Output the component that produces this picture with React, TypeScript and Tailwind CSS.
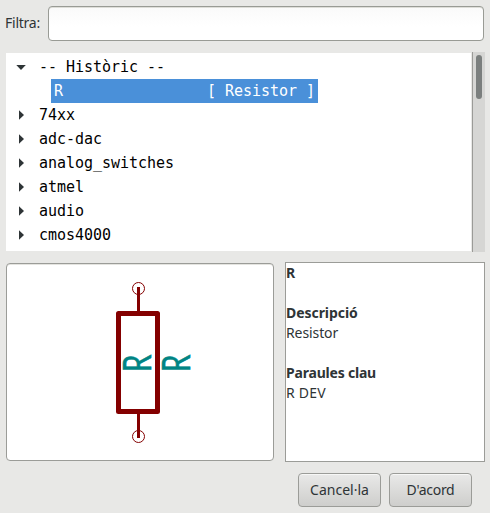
const libraries = ['74xx', 'adc-dac', 'analog_switches', 'atmel', 'audio', 'cmos4000'];

const uiFont = "font-['Noto_Sans','Open_Sans',sans-serif]";
const monoFont = "font-['DejaVu_Sans_Mono',monospace]";

function Arrow({ open = false }: { open?: boolean }) {
  return (
    <svg width="11" height="10" viewBox="0 0 11 10" className="shrink-0" fill="#2e3436">
      <path d={open ? 'M0.3 3H9.8L5 8Z' : 'M3 0.3L8 5L3 9.7Z'} />
    </svg>
  );
}

function LibraryRow({ name, open }: { name: string; open?: boolean }) {
  return (
    <div className="flex h-6 items-center gap-3 pl-[10px]">
      <Arrow open={open} />
      <span className="whitespace-pre">{name}</span>
    </div>
  );
}

function PinLabel({ x }: { x: number }) {
  return (
    <text
      transform={`translate(${x} 372) rotate(-90) scale(0.72 1)`}
      fontSize="38.5"
      fill="#008484"
      stroke="#008484"
      strokeWidth="0.6"
      className="font-['Lato',sans-serif]"
    >
      R
    </text>
  );
}

function SymbolPreview() {
  return (
    <svg width="266" height="196" viewBox="7 264 266 196" className="block">
      <rect x="118.5" y="313.5" width="39" height="98" fill="none" stroke="#840000" strokeWidth="5" strokeLinejoin="round" />
      <path d="M138.5 287V312M138.5 413V438" stroke="#840000" strokeWidth="3" />
      <g fill="none" stroke="#840000" strokeWidth="1">
        <circle cx="138.5" cy="288.5" r="6" />
        <circle cx="138.5" cy="436.5" r="6" />
      </g>
      <PinLabel x={150.6} />
      <PinLabel x={190} />
    </svg>
  );
}

function DialogButton({ label, spacing }: { label: string; spacing: string }) {
  return (
    <button className="flex h-[34px] w-[83px] items-center justify-center rounded-[4px] border border-[#9b9c98] bg-linear-to-b from-[#e9e9e8] to-[#cececc] pb-px shadow-[inset_0_1px_0_#f7f7f6]">
      <span className={spacing}>{label}</span>
    </button>
  );
}

export default function App() {
  return (
    <div className={`flex h-[513px] w-[490px] flex-col overflow-hidden bg-[#e8e8e6] text-[14px] leading-5 text-[#2e3436] ${uiFont}`}>
      <div className="flex h-[52px] pt-[6px] pl-[5px]">
        <label htmlFor="filter" className="w-[43px] pt-[7px] tracking-[-0.25px]">Filtra:</label>
        <input
          id="filter"
          className="h-[35px] w-[436px] rounded-[4px] border border-[#999b95] bg-linear-to-b from-[#fafafa] to-white to-60% px-2 shadow-[inset_0_1px_0_#deded9] outline-none"
        />
      </div>

      <div className="ml-[6px] flex h-[200px]">
        <div className={`mt-px h-[198px] w-[465px] overflow-hidden bg-white pt-[2px] text-[15px] tracking-[-0.03px] text-black ${monoFont}`}>
          <LibraryRow name="-- Històric --" open />
          <div className="ml-[45px] flex h-6 w-[267px] items-center bg-[#4a90d9] pl-[3px] text-white">
            <span className="whitespace-pre">{'R                [ Resistor ]'}</span>
          </div>
          {libraries.map((name) => (
            <LibraryRow key={name} name={name} />
          ))}
        </div>
        <div className="ml-px flex w-[13px] justify-center border-l border-[#9b9b98] bg-[#d6d6d4] pt-[3px]">
          <div className="h-11 w-[6px] rounded-full bg-[#7b7f7e]" />
        </div>
      </div>

      <div className="flex h-[221px] gap-[11px] pt-[10px] pl-[6px]">
        <div className="mt-px h-[198px] w-[268px] overflow-hidden rounded-[4px] border border-[#9b9c98] bg-white shadow-[inset_0_1px_0_#e4e4e0]">
          <SymbolPreview />
        </div>
        <div className="h-[200px] w-[200px] border border-[#9b9c98] bg-white">
          <p className="font-bold tracking-[-0.2px]">R</p>
          <p className="mt-5 font-bold tracking-[-0.05px]">Descripció</p>
          <p className="tracking-[-0.1px]">Resistor</p>
          <p className="mt-5 font-bold tracking-[-0.2px]">Paraules clau</p>
          <p className="tracking-[0.2px]">R DEV</p>
        </div>
      </div>

      <div className="flex gap-2 pl-[298px]">
        <DialogButton label="Cancel·la" spacing="tracking-[0px]" />
        <DialogButton label="D'acord" spacing="tracking-[-0.3px]" />
      </div>
    </div>
  );
}
